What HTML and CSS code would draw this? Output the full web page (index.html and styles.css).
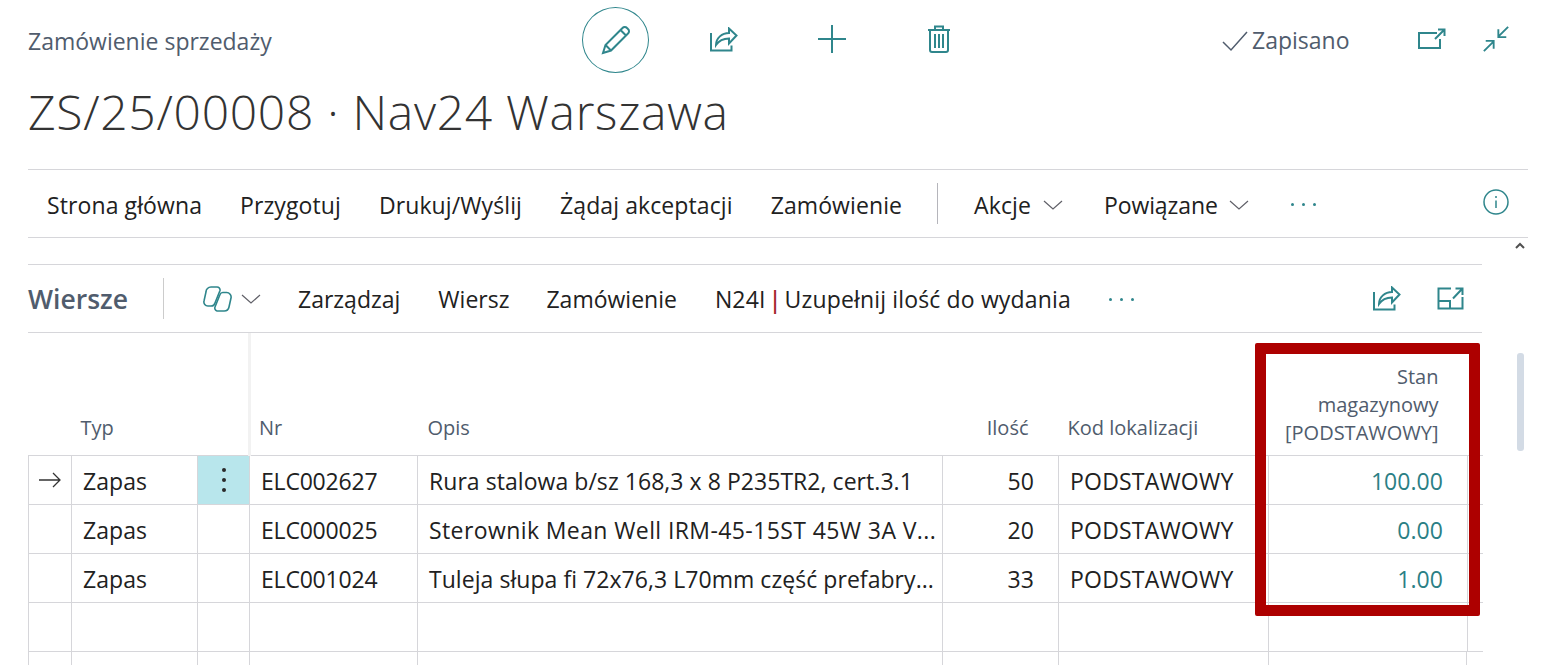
FILE: index.html
```html
<!DOCTYPE html>
<html lang="pl">
<head>
<meta charset="utf-8">
<title>Zamówienie sprzedaży</title>
<link rel="stylesheet" href="styles.css">
</head>
<body>
<div class="page">
  <header class="top">
    <div class="caption">Zamówienie sprzedaży</div>
    <div class="actions">
      <span class="circle"><svg width="32" height="32" viewBox="0 0 32 32" class="ic"><path d="M3 29l2.500-8L22.500 4a3 3 0 0 1 4.500 0l1 1a3 3 0 0 1 0 4.500L11 26.500zM5.500 21l5.500 5.500M20.500 6l5.500 5.500"/></svg></span>
      <span class="act a1"><svg width="28" height="25" viewBox="0 0 28 25" class="ic"><path d="M1 6v17.500h20.500v-5"/><path d="M6 18c0-7 6-12 13-12V1.500l7.500 7-7.500 8v-5c-5 0-10 2-13 6.500z"/></svg></span>
      <span class="act a2"><svg width="30" height="30" viewBox="0 0 30 30" class="ic"><path d="M15 1v28M1 15h28"/></svg></span>
      <span class="act a3"><svg width="24" height="30" viewBox="0 0 24 30" class="ic"><path d="M1 6h22M8 6V2.500h8V6M3 6v20a2 2 0 0 0 2 2h14a2 2 0 0 0 2-2V6M8 10v14M12 10v14M16 10v14"/></svg></span>
    </div>
    <div class="status">
      <svg width="26" height="22" viewBox="0 0 26 22" class="chk"><path d="M1 12l8 8L25 2"/></svg>
      <span>Zapisano</span>
    </div>
    <span class="act a4"><svg width="28" height="22" viewBox="0 0 28 22" class="ic"><path d="M19 5H1v15h21v-9M17 11l9-9M20 1.500h6.500V8"/></svg></span>
    <span class="act a5"><svg width="28" height="28" viewBox="0 0 30 30" class="ic"><path d="M2 28l10-10M4 17h8.500v8.500M28 2L18 12M26 13h-8.500V4.500"/></svg></span>
  </header>
  <h1 class="title">ZS/25/00008 · Nav24 Warszawa</h1>
  <nav class="menu">
    <a>Strona główna</a><a>Przygotuj</a><a>Drukuj/Wyślij</a><a>Żądaj akceptacji</a><a>Zamówienie</a>
    <span class="sep"></span>
    <a class="akcje">Akcje<svg width="20" height="10" viewBox="0 0 20 10" class="chev"><path d="M1 1l9 8 9-8"/></svg></a>
    <a class="pow">Powiązane<svg width="20" height="10" viewBox="0 0 20 10" class="chev"><path d="M1 1l9 8 9-8"/></svg></a>
    <span class="dots"><i></i><i></i><i></i></span>
    <span class="info"><svg width="26" height="26" viewBox="0 0 26 26" class="ic thin"><circle cx="13" cy="13" r="12"/><path d="M13 11.500v7.500M13 7v2"/></svg></span>
  </nav>
  <div class="collapse"><svg width="10" height="7" viewBox="0 0 10 7" class="caret"><path d="M1 6l4-4 4 4"/></svg></div>
  <section class="part">
    <div class="bar">
      <strong class="part-name">Wiersze</strong>
      <span class="sep small"></span>
      <span class="copilot">
        <svg width="29" height="26" viewBox="0 0 29 26" class="ic cp"><path d="M8 1h6a3 3 0 0 1 3 3.500L12 17a4 4 0 0 1-4 3H5a4 4 0 0 1-4-5L3 6a5 5 0 0 1 5-5z"/><path d="M14 25h7a5 5 0 0 0 5-4l2-9a4.500 4.500 0 0 0-4.500-5.500H20a3 3 0 0 0-3 2L12 21a3 3 0 0 0 2 4z"/></svg>
        <svg width="20" height="10" viewBox="0 0 20 10" class="chev"><path d="M1 1l9 8 9-8"/></svg>
      </span>
      <a>Zarządzaj</a><a class="wiersz">Wiersz</a><a>Zamówienie</a><a class="custom"><span>N24I <b class="pipe">|</b> Uzupełnij ilość do wydania</span></a>
      <span class="dots bar-dots"><i></i><i></i><i></i></span>
      <span class="right">
        <svg width="28" height="25" viewBox="0 0 28 25" class="ic"><path d="M1 6v17.500h20.500v-5"/><path d="M6 18c0-7 6-12 13-12V1.500l7.500 7-7.500 8v-5c-5 0-10 2-13 6.500z"/></svg>
        <svg width="27" height="23" viewBox="0 0 27 23" class="ic expand"><path d="M14 1.500H1.500v20h24V10M1.500 14H13v7.500M16 11.500l8.500-9M18.500 1.500h7V8"/></svg>
      </span>
    </div>
    <table class="lines">
      <colgroup><col class="c0"><col class="c1"><col class="c2"><col class="c3"><col class="c4"><col class="c5"><col class="c6"><col class="c7"><col class="c8"></colgroup>
      <thead>
        <tr><th></th><th class="typ">Typ</th><th class="freeze"></th><th class="nr">Nr</th><th>Opis</th><th class="num">Ilość</th><th class="kod">Kod lokalizacji</th><th class="num stan">Stan<br>magazynowy<br>[PODSTAWOWY]</th><th></th></tr>
      </thead>
      <tbody>
        <tr><td class="mark"><svg width="24" height="16" viewBox="0 0 24 16" class="arrow"><path d="M1 8h21M15 1l7 7-7 7"/></svg></td><td>Zapas</td><td class="kebab"><span><i></i><i></i><i></i></span></td><td class="code">ELC002627</td><td>Rura stalowa b/sz 168,3 x 8 P235TR2, cert.3.1</td><td class="num">50</td><td class="loc">PODSTAWOWY</td><td class="num link">100.00</td><td class="edge"></td></tr>
        <tr><td></td><td>Zapas</td><td></td><td class="code">ELC000025</td><td class="wide">Sterownik Mean Well IRM-45-15ST 45W 3A V...</td><td class="num">20</td><td class="loc">PODSTAWOWY</td><td class="num link">0.00</td><td class="edge"></td></tr>
        <tr><td></td><td>Zapas</td><td></td><td class="code">ELC001024</td><td>Tuleja słupa fi 72x76,3 L70mm część prefabry...</td><td class="num">33</td><td class="loc">PODSTAWOWY</td><td class="num link">1.00</td><td class="edge"></td></tr>
        <tr><td></td><td></td><td></td><td></td><td></td><td></td><td></td><td></td><td class="edge"></td></tr>
      </tbody>
    </table>
    <div class="stub"><span></span><span></span><span></span><span></span><span></span><span></span><span></span><span></span></div>
    <div class="redbox"></div>
  </section>
  <div class="scrollthumb"></div>
</div>
</body>
</html>
```
FILE: styles.css
```css
* { box-sizing: border-box; }
html, body { margin: 0; height: 665px; overflow: hidden; background: #fff; }
body { font-family: "Open Sans", "Noto Sans", "Liberation Sans", sans-serif; color: #212121; }
.page { position: relative; height: 665px; overflow: hidden; padding: 0 35px 0 28px; }
svg { display: block; fill: none; }
.ic path, .ic circle { stroke: #2f868c; stroke-width: 2; fill: none; }
.ic.thin path, .ic.thin circle { stroke-width: 1.500; }
.top { display: flex; align-items: center; height: 82px; }
.caption { width: 554px; font-size: 23px; color: #505c6d; }
.actions { display: flex; align-items: center; }
.circle { width: 67px; height: 66px; margin-top: -3px; border: 1px solid #2f868c; border-radius: 50%; display: flex; align-items: center; justify-content: center; }
.act { display: block; }
.a1 { margin: -4px 0 0 61px; }
.a2 { margin: -4px 0 0 79px; }
.a3 { margin: -4px 0 0 80px; }
.status { display: flex; align-items: center; gap: 4px; margin-left: 271px; font-size: 23px; color: #505c6d; }
.status span { margin-top: -2px; }
.chk path { stroke: #505c6d; stroke-width: 1.500; }
.a4 { margin: -4px 0 0 68px; }
.a5 { margin: -4px 0 0 36px; }
.title { margin: 0; height: 87px; font-weight: 300; font-size: 48px; line-height: 60px; letter-spacing: .7px; color: #333; white-space: nowrap; }
.menu { display: flex; align-items: center; width: 1500px; height: 69px; border-top: 1px solid #d6d6da; border-bottom: 1px solid #d6d6da; padding: 2px 0 0 19px; font-size: 23px; letter-spacing: .1px; }
.menu a, .bar a { display: flex; align-items: center; white-space: nowrap; }
.menu > a { margin-right: 38px; }
.menu > a.akcje { margin-right: 41px; }
.menu > a.pow { letter-spacing: -.1px; }
.sep { width: 1px; height: 41px; background: #b5b5bb; margin-right: 36px; margin-left: -3px; }
.menu .sep { margin-top: -2px; }
.chev { margin-left: 12px; }
.pow .chev { margin-left: 11px; }
.chev path { stroke: #606068; stroke-width: 1.200; }
.dots { display: flex; gap: 8px; margin-left: 4px; }
.bar-dots { margin: 2px 0 0; }
.dots i { width: 3px; height: 3px; border-radius: 50%; background: #2f868c; }
.info { margin-left: auto; margin-right: 19px; margin-top: -6px; }
.collapse { width: 1500px; height: 26px; display: flex; justify-content: flex-end; padding: 4px 3px 0 0; }
.caret path { stroke: #505050; stroke-width: 2; }
.part { position: relative; width: 1454px; border-top: 1px solid #d6d6da; }
.bar { display: flex; align-items: center; height: 68px; border-bottom: 1px solid #d6d6da; font-size: 23px; }
.part-name { font-size: 26.500px; font-weight: 600; color: #505c6d; }
.sep.small { margin: 0 39px 0 35px; height: 41px; background: #ccc; }
.copilot { display: flex; align-items: center; margin-right: 37px; }
.cp path { stroke-width: 1.600; }
.copilot .chev { margin-left: 9px; }
.bar > a { margin-right: 38px; }
.bar > a.wiersz { margin-right: 37px; }
.bar > a.custom { letter-spacing: .15px; }
.pipe { font-weight: 600; color: #a4262c; margin: 0 -3px; }
.right { margin-left: auto; display: flex; align-items: center; gap: 36px; margin-right: 18px; }
.lines { table-layout: fixed; width: 1454px; border-collapse: collapse; font-size: 23px; letter-spacing: .05px; }
.c0 { width: 43px; } .c1 { width: 126px; } .c2 { width: 52px; } .c3 { width: 168px; } .c4 { width: 525px; } .c5 { width: 116px; } .c6 { width: 210px; } .c7 { width: 199px; } .c8 { width: 15px; }
.lines th { height: 122px; padding: 0 10px 13px; vertical-align: bottom; text-align: left; font-weight: 400; font-size: 20px; line-height: 28px; letter-spacing: 0; color: #505c6d; border-bottom: 1px solid #d6d6da; }
.lines th.typ { padding-left: 9px; }
.lines th.nr { padding-left: 8px; }
.lines th.kod { padding-left: 9px; }
.lines th.freeze { border-right: 3px solid #f2f2f2; }
.lines th.num { text-align: right; padding-right: 30px; }
.lines th.stan { padding-right: 29px; padding-bottom: 8px; }
.lines td { height: 49px; padding: 3px 11px 0; border: 1px solid #d6d6da; white-space: nowrap; overflow: hidden; }
.lines td:first-child { padding: 0; }
.lines td.num { text-align: right; padding-right: 24px; }
.lines td.link { color: #2b7f85; }
.lines td.edge { border-right: none; }
.lines td.wide { letter-spacing: .4px; }
.lines td.loc { letter-spacing: .2px; }
.lines td.code { letter-spacing: -.2px; }
.stub { display: grid; grid-template-columns: 43px 126px 52px 168px 525px 116px 210px 199px; height: 14px; }
.stub span { border-left: 1px solid #d6d6da; }
.stub span:last-child { border-right: 1px solid #d6d6da; }
.mark .arrow { margin-left: 9px; }
.arrow path { stroke: #333; stroke-width: 1.300; }
.lines td.kebab { background: #b8e6ec; padding: 0; }
.kebab span { display: flex; flex-direction: column; align-items: center; gap: 6px; }
.kebab i { width: 4px; height: 4px; border-radius: 50%; background: #2a2a2a; }
.redbox { position: absolute; left: 1227px; top: 78px; width: 225px; height: 273px; border: 11px solid #ad0000; border-radius: 2px; }
.scrollthumb { position: absolute; left: 1517px; top: 353px; width: 7px; height: 98px; border-radius: 3px; background: #d3dbe5; }
```
